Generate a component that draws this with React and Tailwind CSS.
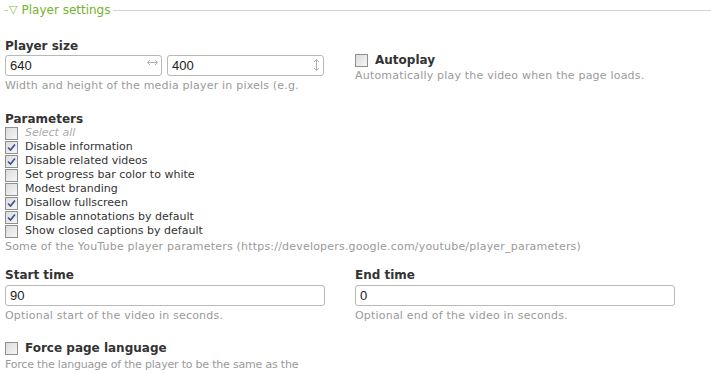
import React from 'react'

const params = [
  { label: 'Select all', checked: false, muted: true },
  { label: 'Disable information', checked: true },
  { label: 'Disable related videos', checked: true },
  { label: 'Set progress bar color to white', checked: false },
  { label: 'Modest branding', checked: false },
  { label: 'Disallow fullscreen', checked: true },
  { label: 'Disable annotations by default', checked: true },
  { label: 'Show closed captions by default', checked: false },
]

const desc = 'text-[11px] leading-[13px] tracking-[0.2px] text-[#9a9a9a]'

function Box({ checked }) {
  return (
    <span className="flex h-[13px] w-[13px] shrink-0 items-center justify-center border border-[#8f8f8f] bg-gradient-to-br from-[#dcdcdc] to-[#f6f6f6]">
      {checked && (
        <svg width="9" height="9" viewBox="0 0 9 9">
          <path d="M1 4.5 L3.5 7 L8 1.5" fill="none" stroke="#3c4b8c" strokeWidth="1.6" />
        </svg>
      )}
    </span>
  )
}

function ArrowH() {
  return (
    <svg width="11" height="7" viewBox="0 0 11 7" className="absolute right-[3px] top-[3px]">
      <path d="M0.5 3.5 H10.5 M3 1 L0.5 3.5 L3 6 M8 1 L10.5 3.5 L8 6" fill="none" stroke="#b0b0b0" strokeWidth="1" />
    </svg>
  )
}

function ArrowV() {
  return (
    <svg width="7" height="12" viewBox="0 0 7 12" className="absolute right-[3px] top-[3px]">
      <path d="M3.5 0.5 V11.5 M1 3 L3.5 0.5 L6 3 M1 9 L3.5 11.5 L6 9" fill="none" stroke="#b0b0b0" strokeWidth="1" />
    </svg>
  )
}

function TextInput({ value, icon, className }) {
  return (
    <div className={`relative flex h-[21px] items-center rounded-[3px] border border-[#b8b8b8] bg-white px-[4px] font-['Liberation_Sans',sans-serif] text-[13px] text-[#222] ${className}`}>
      {value}
      {icon === 'h' && <ArrowH />}
      {icon === 'v' && <ArrowV />}
    </div>
  )
}

export default function App() {
  return (
    <div className="h-[373px] w-[711px] overflow-hidden bg-white font-['DejaVu_Sans',sans-serif] text-[#333]">
      <div className="flex h-[20px] items-center pl-[4px]">
        <span className="h-px w-[4px] bg-[#ccc]" />
        <span className="ml-[1px] text-[11px] text-[#8cbb52]">▽</span>
        <span className="ml-[4px] text-[12px] text-[#75b22b]">Player settings</span>
        <span className="ml-[3px] h-px flex-1 bg-[#d4d4d4]" />
      </div>

      <div className="grid grid-cols-[350px_1fr] pl-[5px]">
        <div className="pt-[19px]">
          <div className="text-[12px] font-bold leading-[15px]">Player size</div>
          <div className="mt-[1px] flex gap-[5px]">
            <TextInput value="640" icon="h" className="w-[157px]" />
            <TextInput value="400" icon="v" className="w-[157px]" />
          </div>
          <div className={`mt-[3px] ${desc}`}>Width and height of the media player in pixels (e.g.</div>
        </div>
        <div className="pt-[33px]">
          <label className="flex items-center gap-[7px]">
            <Box />
            <span className="text-[12px] font-bold leading-[15px]">Autoplay</span>
          </label>
          <div className={`mt-[1px] ${desc}`}>Automatically play the video when the page loads.</div>
        </div>
      </div>

      <div className="pl-[5px] pt-[20px]">
        <div className="text-[12px] font-bold leading-[14px]">Parameters</div>
        {params.map((p) => (
          <label key={p.label} className="flex h-[14px] items-center gap-[7px]">
            <Box checked={p.checked} />
            <span className={p.muted ? 'text-[11px] italic text-[#aaa]' : 'text-[11px] text-[#333]'}>{p.label}</span>
          </label>
        ))}
        <div className={`mt-[2px] ${desc}`}>
          Some of the YouTube player parameters (https://developers.google.com/youtube/player_parameters)
        </div>
      </div>

      <div className="grid grid-cols-[350px_1fr] pl-[5px] pt-[15px]">
        <div>
          <div className="text-[12px] font-bold leading-[15px]">Start time</div>
          <TextInput value="90" className="mt-[2px] w-[320px]" />
          <div className={`mt-[3px] ${desc}`}>Optional start of the video in seconds.</div>
        </div>
        <div>
          <div className="text-[12px] font-bold leading-[15px]">End time</div>
          <TextInput value="0" className="mt-[2px] w-[320px]" />
          <div className={`mt-[3px] ${desc}`}>Optional end of the video in seconds.</div>
        </div>
      </div>

      <div className="pl-[5px] pt-[19px]">
        <label className="flex items-center gap-[7px]">
          <Box />
          <span className="text-[12px] font-bold leading-[15px]">Force page language</span>
        </label>
        <div className="mt-[2px] text-[11px] leading-[13px] tracking-[-0.2px] text-[#9a9a9a]">
          Force the language of the player to be the same as the
        </div>
      </div>
    </div>
  )
}
